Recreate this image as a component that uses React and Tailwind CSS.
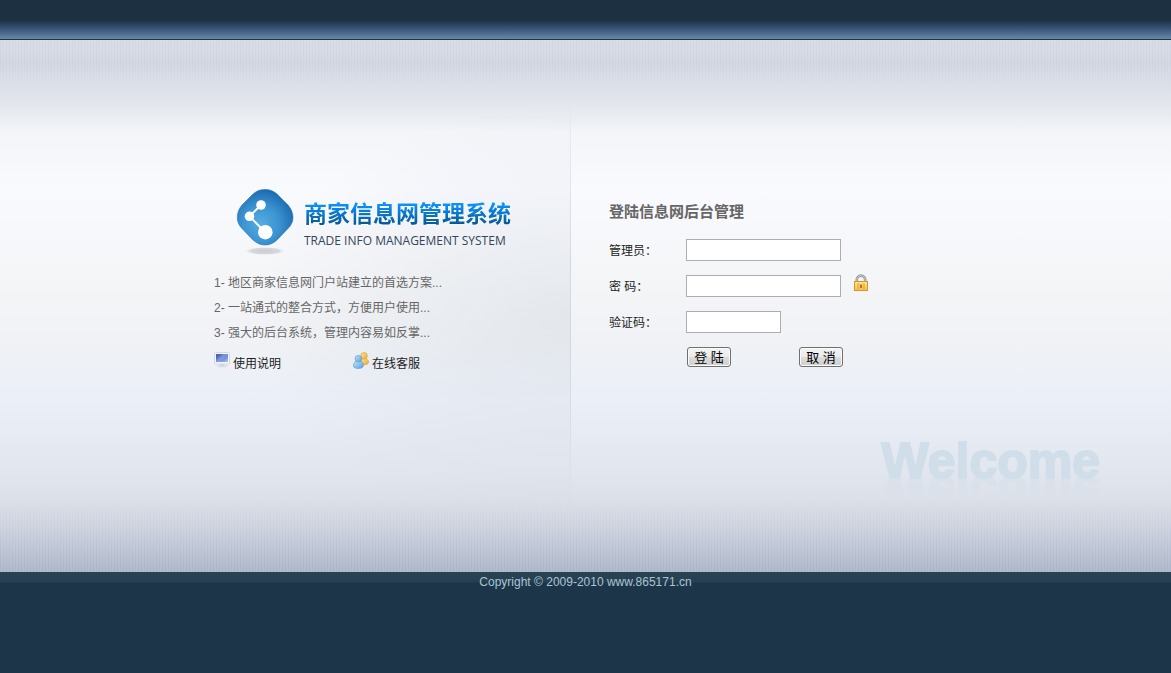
import React, { useState } from "react";

const features = [
  "1- 地区商家信息网门户站建立的首选方案...",
  "2- 一站通式的整合方式，方便用户使用...",
  "3- 强大的后台系统，管理内容易如反掌...",
];

function LogoMark() {
  return (
    <svg width="58" height="70" viewBox="0 0 58 70" aria-hidden="true" className="shrink-0">
      <defs>
        <radialGradient id="logoFill" cx="0.42" cy="0.62" r="0.62">
          <stop offset="0" stopColor="#55aee2" />
          <stop offset="0.55" stopColor="#3a92d0" />
          <stop offset="1" stopColor="#1c6bb0" />
        </radialGradient>
        <radialGradient id="logoShadow">
          <stop offset="0" stopColor="#cccdd0" />
          <stop offset="0.7" stopColor="#d6d7da" />
          <stop offset="1" stopColor="#e4e6e9" stopOpacity="0" />
        </radialGradient>
      </defs>
      <ellipse cx="29" cy="63" rx="20" ry="4" fill="url(#logoShadow)" />
      <path
        d="M29 1.5 C34 1.5 38 3 42 7 L52 17 C54.500 20 57 24 57 29.500 C57 34 55 37.500 52 40.500 L42 51 C38 55 34 57 29 57 C24 57 20 55 16 51 L6 40.500 C3 37.500 1.300 34 1.300 29.500 C1.300 24 3.500 20 6 17 L16 7 C20 3 24 1.500 29 1.500Z"
        fill="url(#logoFill)"
        stroke="#2274b8"
        strokeWidth="0.6"
      />
      <path d="M25 17 L13.500 28.300 L29.300 44.200" fill="none" stroke="#fff" strokeWidth="2" />
      <circle cx="25" cy="17" r="4.800" fill="#fff" />
      <circle cx="13.500" cy="28.300" r="4.800" fill="#fff" />
      <circle cx="29.300" cy="44.200" r="7.300" fill="#fff" />
    </svg>
  );
}

function MonitorIcon() {
  return (
    <svg width="16" height="16" viewBox="0 0 16 16" aria-hidden="true">
      <defs>
        <linearGradient id="screenFill" x1="0" y1="0" x2="1" y2="1">
          <stop offset="0" stopColor="#3f5cb4" />
          <stop offset="0.5" stopColor="#5f7fd0" />
          <stop offset="1" stopColor="#b5c3ee" />
        </linearGradient>
      </defs>
      <ellipse cx="8" cy="14" rx="5.5" ry="1.5" fill="#dbe1e8" />
      <rect x="6" y="11" width="4" height="3" fill="#cdd5de" />
      <rect x="0.5" y="0.5" width="15" height="11.5" rx="1" fill="#f3f6fa" stroke="#cfd9e4" />
      <rect x="2" y="2" width="12" height="8" fill="url(#screenFill)" />
      <path d="M2 8 L9 2 H14 L6 10 H2Z" fill="#fff" opacity="0.18" />
    </svg>
  );
}

function UsersIcon() {
  return (
    <svg width="16" height="17" viewBox="0 0 16 17" aria-hidden="true">
      <defs>
        <linearGradient id="userGold" x1="0" y1="0" x2="1" y2="1">
          <stop offset="0" stopColor="#ffe79a" />
          <stop offset="1" stopColor="#eba834" />
        </linearGradient>
        <linearGradient id="userBlue" x1="0" y1="0" x2="1" y2="1">
          <stop offset="0" stopColor="#c9e8fc" />
          <stop offset="1" stopColor="#569fe0" />
        </linearGradient>
      </defs>
      <path d="M7 11 C7 7.5 9 6.5 11 6.5 C14 6.5 15.5 8 15.5 10 C15.5 12 13.5 12.8 11 12.8Z" fill="url(#userGold)" stroke="#dba23e" strokeWidth="0.7" />
      <circle cx="11" cy="3.8" r="3.3" fill="url(#userGold)" stroke="#dba23e" strokeWidth="0.7" />
      <path d="M0.5 13.8 C0.5 10.500 2.500 9 5.500 9 C8.500 9 10.300 10.500 10.300 13.500 C10.300 15.800 8 16.400 5.400 16.400 C2.800 16.400 0.500 15.800 0.500 13.800Z" fill="url(#userBlue)" stroke="#5c9bd6" strokeWidth="0.7" />
      <circle cx="5.4" cy="6.7" r="3.3" fill="url(#userBlue)" stroke="#5c9bd6" strokeWidth="0.7" />
    </svg>
  );
}

function LockIcon() {
  return (
    <svg width="16" height="18" viewBox="0 0 16 18" aria-hidden="true">
      <defs>
        <linearGradient id="lockFill" x1="0" y1="0" x2="0" y2="1">
          <stop offset="0" stopColor="#fdec9a" />
          <stop offset="1" stopColor="#f7bf45" />
        </linearGradient>
      </defs>
      <path d="M3.800 9 V5.800 A4.200 4.200 0 0 1 12.200 5.800 V9" fill="none" stroke="#8f9296" strokeWidth="2.6" />
      <path d="M3.800 9 V5.800 A4.200 4.200 0 0 1 12.200 5.800 V9" fill="none" stroke="#cfd1d4" strokeWidth="1" />
      <rect x="1.5" y="7.5" width="13" height="9" fill="url(#lockFill)" stroke="#d9952a" />
      <path d="M4 10H6.500 M4 12H6.500 M4 14H6.500 M9.500 10H12 M9.500 12H12 M9.500 14H12" stroke="#e0a02f" />
      <rect x="7" y="10.500" width="2" height="3.500" fill="#b9781a" />
    </svg>
  );
}

function Field({ id, label, type = "text", inputClass, children }) {
  const [value, setValue] = useState("");

  return (
    <div className="flex items-center">
      <label htmlFor={id} className="w-[77px] shrink-0 pt-[2px] text-[#222]">{label}</label>
      <input
        id={id}
        type={type}
        value={value}
        onChange={e => setValue(e.target.value)}
        className={`h-[22px] border border-[#abadb3] bg-white px-1 outline-none ${inputClass}`}
      />
      {children}
    </div>
  );
}

function FormButton({ children, type }) {
  return (
    <button
      type={type}
      className="h-5 w-11 rounded-[3px] border border-[#707070] bg-[linear-gradient(#f3f3f3_0,#ebebeb_50%,#dddddd_50%,#cfcfcf_100%)] text-[13px] leading-none text-black shadow-[inset_0_0_0_1px_#fafafa]"
    >
      {children}
    </button>
  );
}

function Backdrop() {
  return (
    <div aria-hidden="true" className="pointer-events-none absolute inset-0">
      <div className="absolute inset-x-0 top-0 h-12 bg-[repeating-linear-gradient(90deg,rgba(120,130,160,0.06)_0_1px,transparent_1px_3px)] mask-b-from-40%" />
      <div className="absolute inset-x-0 bottom-0 h-[76px] bg-[repeating-linear-gradient(90deg,rgba(110,120,150,0.1)_0_1px,transparent_1px_3px)] mask-t-from-10%" />
    </div>
  );
}

export default function App() {
  return (
    <div className="flex min-h-screen flex-col bg-[#1d3549] font-['Liberation_Sans','Noto_Sans_CJK_SC',sans-serif] text-xs">
      <header className="h-10 border-b border-[#1d3447] bg-[linear-gradient(#1c3042_0,#1c3042_20px,#3d5a7c_30px,#6789a8_39px)]" />

      <main className="relative grid h-[532px] grid-cols-[571fr_600fr] bg-[linear-gradient(#d9dee6_0,#d3d8e4_24px,#dce1ea_48px,#e6e9ee_70px,#f3f5f9_92px,#f9fafe_150px,#f5f6f8_230px,#f0f2f5_300px,#ebeff8_360px,#e2e6ef_430px,#dce0e8_460px,#ced3e0_490px,#b1bacd_532px)]">
        <Backdrop />

        <section className="relative bg-[radial-gradient(ellipse_320px_210px_at_100%_52%,rgba(208,215,224,0.42),transparent)] pt-[148px]">
          <div aria-hidden="true" className="absolute inset-y-8 right-0 w-px bg-[#d3d9e4] shadow-[1px_0_0_#fff] mask-y-from-60%" />
          <div className="ml-auto w-[357px]">
            <div className="flex pl-[22px]">
              <LogoMark />
              <div className="ml-[10px] pt-[9px]">
                <h1 className="bg-linear-to-b from-[#0b93ff] from-20% to-[#075a94] to-80% bg-clip-text text-[23px] leading-[34px] font-bold whitespace-nowrap text-transparent drop-shadow-[0_0_1px_#fff]">
                  商家信息网管理系统
                </h1>
                <p className="font-['Open_Sans',sans-serif] text-xs leading-5 font-medium whitespace-nowrap text-[#33465c]">
                  TRADE INFO MANAGEMENT SYSTEM
                </p>
              </div>
            </div>
            <ul className="mt-[13px] leading-[25px] text-[#666]">
              {features.map(f => (
                <li key={f}>{f}</li>
              ))}
            </ul>
            <nav className="mt-[6px] flex leading-6 text-[#222]">
              <a href="#help" className="flex w-[139px] gap-[3px]">
                <MonitorIcon />
                使用说明
              </a>
              <a href="#service" className="flex gap-[3px]">
                <UsersIcon />
                在线客服
              </a>
            </nav>
          </div>
        </section>

        <section className="relative pt-[162px] pl-[38px]">
          <h2 className="text-[15px] leading-5 font-bold text-[#666]">登陆信息网后台管理</h2>
          <form className="mt-[17px] flex flex-col gap-[14px]" onSubmit={e => e.preventDefault()}>
            <Field id="username" label="管理员：" inputClass="w-[155px]" />
            <div className="relative">
              <Field id="password" label="密 码：" type="password" inputClass="w-[155px]">
                <span className="ml-3 h-[22px]">
                  <span className="flex h-4 items-center">
                    <LockIcon />
                  </span>
                </span>
              </Field>
            </div>
            <Field id="verifycode" label="验证码：" inputClass="w-[95px]" />
            <div className="flex gap-[68px] pl-[78px]">
              <FormButton type="submit">登 陆</FormButton>
              <FormButton type="reset">取 消</FormButton>
            </div>
          </form>
          <div className="absolute right-[71px] bottom-[86px] text-[50px] leading-[50px] font-bold text-[#d0deea] [-webkit-text-stroke:2px_#d0deea] [-webkit-box-reflect:below_-18px_linear-gradient(transparent_45%,rgba(0,0,0,0.8))]">
            Welcome
          </div>
        </section>
      </main>

      <footer className="flex-1 bg-[linear-gradient(#2a4353_0,#273f52_10px,#1d3549_11px)] text-center leading-5 text-[#a9c5d3]">
        Copyright © 2009-2010 www.865171.cn
      </footer>
    </div>
  );
}
